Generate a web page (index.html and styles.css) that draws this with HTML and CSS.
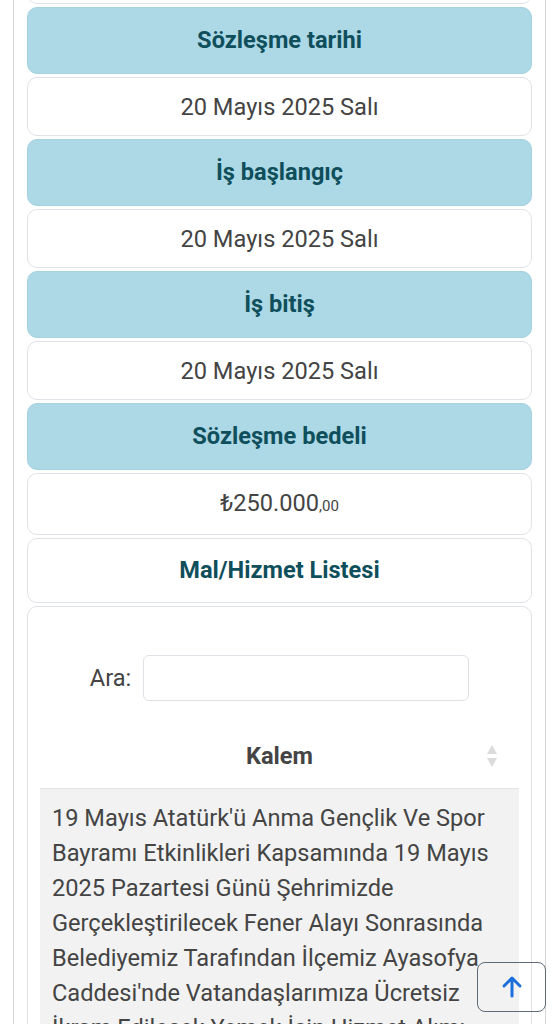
FILE: index.html
```html
<!DOCTYPE html>
<html lang="tr">
<head>
    <meta charset="UTF-8">
    <meta name="viewport" content="width=device-width, initial-scale=1.0">
    <title>Sözleşme Detayı</title>
    <link rel="stylesheet" href="styles.css">
</head>
<body>
    <div class="page">
        <div class="info-list">
            <div class="info-value prev"></div>

            <div class="info-title">Sözleşme tarihi</div>
            <div class="info-value">20 Mayıs 2025 Salı</div>

            <div class="info-title">İş başlangıç</div>
            <div class="info-value">20 Mayıs 2025 Salı</div>

            <div class="info-title">İş bitiş</div>
            <div class="info-value">20 Mayıs 2025 Salı</div>

            <div class="info-title">Sözleşme bedeli</div>
            <div class="info-value">₺250.000<span class="cents">,00</span></div>

            <div class="info-value list-title">Mal/Hizmet Listesi</div>

            <div class="table-card">
                <div class="table-filter">
                    <label for="search">Ara:</label>
                    <input type="search" id="search">
                </div>
                <table class="item-table">
                    <thead>
                        <tr>
                            <th>
                                Kalem
                                <span class="sort">
                                    <svg width="12" height="24" viewBox="0 0 12 24">
                                        <path d="M6 1 L11 10 L1 10 Z" fill="#dcdcdc"/>
                                        <path d="M6 23 L11 14 L1 14 Z" fill="#dcdcdc"/>
                                    </svg>
                                </span>
                            </th>
                        </tr>
                    </thead>
                    <tbody>
                        <tr>
                            <td>19 Mayıs Atatürk'ü Anma Gençlik Ve Spor Bayramı Etkinlikleri Kapsamında 19 Mayıs 2025 Pazartesi Günü Şehrimizde Gerçekleştirilecek Fener Alayı Sonrasında Belediyemiz Tarafından İlçemiz Ayasofya Caddesi'nde Vatandaşlarımıza Ücretsiz İkram Edilecek Yemek İçin Hizmet Alımı</td>
                        </tr>
                    </tbody>
                </table>
            </div>
        </div>
    </div>

    <a href="#" class="to-top">
        <svg width="22" height="24" viewBox="0 0 22 24">
            <path d="M11 21 V4 M3 11 L11 3 L19 11" fill="none" stroke="#1a6fdc" stroke-width="3" stroke-linecap="round" stroke-linejoin="round"/>
        </svg>
    </a>
</body>
</html>
```

FILE: styles.css
```css
body {
    margin: 0;
    background: #fff;
    font-family: Roboto, "Noto Sans", Arial, sans-serif;
    color: #444;
}
.page {
    margin: 0 11px 0 13px;
    border-left: 1.5px solid #d6d6d6;
    border-right: 1.5px solid #d6d6d6;
    padding: 0 13px;
    min-height: 1024px;
    overflow: hidden;
}
.info-list {
    display: flex;
    flex-direction: column;
    gap: 3px;
}
.info-title,
.info-value {
    border: 1.5px solid #dfe2e6;
    border-radius: 10px;
    text-align: center;
    font-size: 23.6px;
    line-height: 28px;
}
.info-title {
    background: #add8e6;
    border-color: #a6d2e0;
    color: #0f4f5c;
    font-weight: bold;
    padding: 18px 10px 19px;
}
.info-value {
    background: #fff;
    padding: 15px 10px 14px;
}
.info-value.prev {
    margin-top: -55px;
    height: 28px;
}
.cents {
    font-size: 15px;
}
.list-title {
    color: #0f4f5c;
    font-weight: bold;
    padding: 17px 10px 18px;
}
.table-card {
    border: 1.5px solid #dfe2e6;
    border-radius: 10px;
    padding: 48px 12px 0;
}
.table-filter {
    display: flex;
    justify-content: center;
    align-items: center;
    gap: 12px;
    font-size: 23.6px;
}
.table-filter input {
    width: 326px;
    height: 46px;
    box-sizing: border-box;
    border: 1.5px solid #dee2e6;
    border-radius: 6px;
    outline: none;
}
.item-table {
    width: 100%;
    margin-top: 23px;
    border-collapse: collapse;
    font-size: 23.6px;
}
.item-table th {
    position: relative;
    padding: 18px 10px;
    border-bottom: 1.5px solid #e4e4e4;
    color: #444;
    line-height: 28px;
}
.sort {
    position: absolute;
    right: 21px;
    top: 20px;
}
.item-table td {
    background: #f2f2f2;
    padding: 12px 12px;
    line-height: 35px;
    text-align: left;
}
.to-top {
    position: fixed;
    right: 11px;
    bottom: 12px;
    width: 69px;
    height: 50px;
    box-sizing: border-box;
    border: 1.5px solid #5f6b76;
    border-radius: 8px;
    display: flex;
    align-items: center;
    justify-content: center;
}
```
